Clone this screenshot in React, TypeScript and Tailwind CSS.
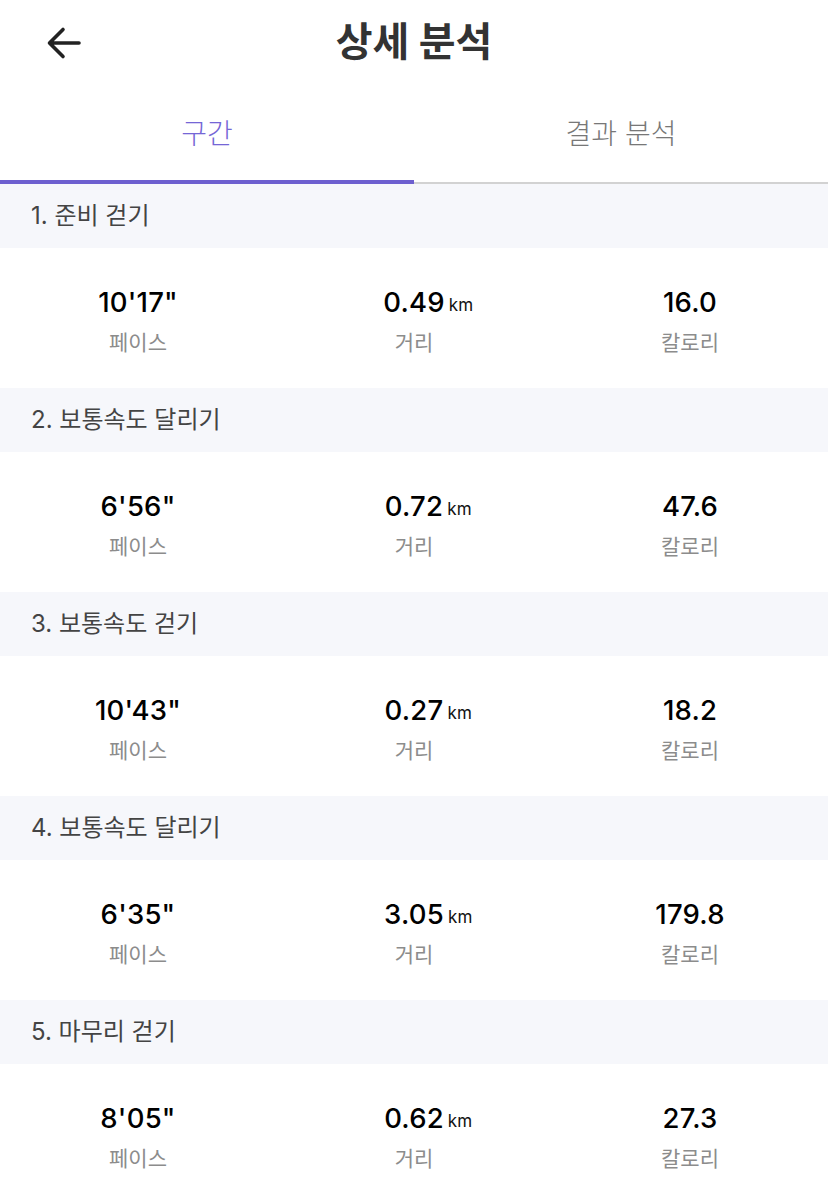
import React, { useState } from 'react';

const FONT = 'font-["Inter","Noto_Sans_CJK_KR",sans-serif]';

interface Segment {
    title: string;
    pace: string;
    distance: string;
    calories: string;
}

const segments: Segment[] = [
    { title: '1. 준비 걷기', pace: `10'17"`, distance: '0.49', calories: '16.0' },
    { title: '2. 보통속도 달리기', pace: `6'56"`, distance: '0.72', calories: '47.6' },
    { title: '3. 보통속도 걷기', pace: `10'43"`, distance: '0.27', calories: '18.2' },
    { title: '4. 보통속도 달리기', pace: `6'35"`, distance: '3.05', calories: '179.8' },
    { title: '5. 마무리 걷기', pace: `8'05"`, distance: '0.62', calories: '27.3' },
];

// 값 + 라벨 한 칸
const Stat = ({ value, unit, label }: { value: string; unit?: string; label: string }) => (
    <div className="flex flex-col items-center">
        <div className="relative text-[27.5px] leading-[36px] font-medium text-black tracking-[0.2px]">
            {value}
            {unit && (
                <span className="absolute left-full bottom-[5px] ml-[4px] text-[17px] leading-[20px] font-normal text-[#111]">
                    {unit}
                </span>
            )}
        </div>
        <div className="mt-[10px] text-[21px] leading-[26px] text-[#8c8c8c]">{label}</div>
    </div>
);

export default function App() {
    const [tab, setTab] = useState(0);

    return (
        <div className={`w-[828px] min-h-[1190px] bg-white ${FONT}`}>
            {/* 헤더 */}
            <div className="relative h-[88px] flex items-center justify-center">
                <button className="absolute left-[46px] top-[26px] p-0">
                    <svg width="36" height="34" viewBox="0 0 36 34" fill="none">
                        <path
                            d="M33 17H4M17 3.5L3.5 17 17 30.5"
                            stroke="#222"
                            strokeWidth="3.6"
                            strokeLinecap="round"
                            strokeLinejoin="round"
                        />
                    </svg>
                </button>
                <h1 className="text-[40px] leading-none font-bold text-[#333] -mt-[4px]">상세 분석</h1>
            </div>

            {/* 탭 */}
            <div className="relative flex h-[96px]">
                {['구간', '결과 분석'].map((label, i) => (
                    <button
                        key={label}
                        onClick={() => setTab(i)}
                        className={`flex-1 flex items-center justify-center pb-[4px] text-[28px] font-light ${
                            tab === i ? 'text-[#7566d6]' : 'text-[#777]'
                        }`}
                    >
                        {label}
                    </button>
                ))}
                <div className="absolute left-0 right-0 bottom-0 h-[2px] bg-[#d2d2d2]" />
                <div
                    className={`absolute bottom-0 h-[4px] w-[414px] bg-[#6d5fcf] ${tab === 0 ? 'left-0' : 'left-[414px]'}`}
                />
            </div>

            {/* 구간 목록 */}
            {segments.map((s) => (
                <div key={s.title}>
                    <div className="h-[64px] flex items-center px-[31px] bg-[#f6f7fb] text-[24px] text-[#444]">
                        {s.title}
                    </div>
                    <div className="h-[140px] grid grid-cols-3 items-start pt-[36px]">
                        <Stat value={s.pace} label="페이스" />
                        <Stat value={s.distance} unit="km" label="거리" />
                        <Stat value={s.calories} label="칼로리" />
                    </div>
                </div>
            ))}
        </div>
    );
}
